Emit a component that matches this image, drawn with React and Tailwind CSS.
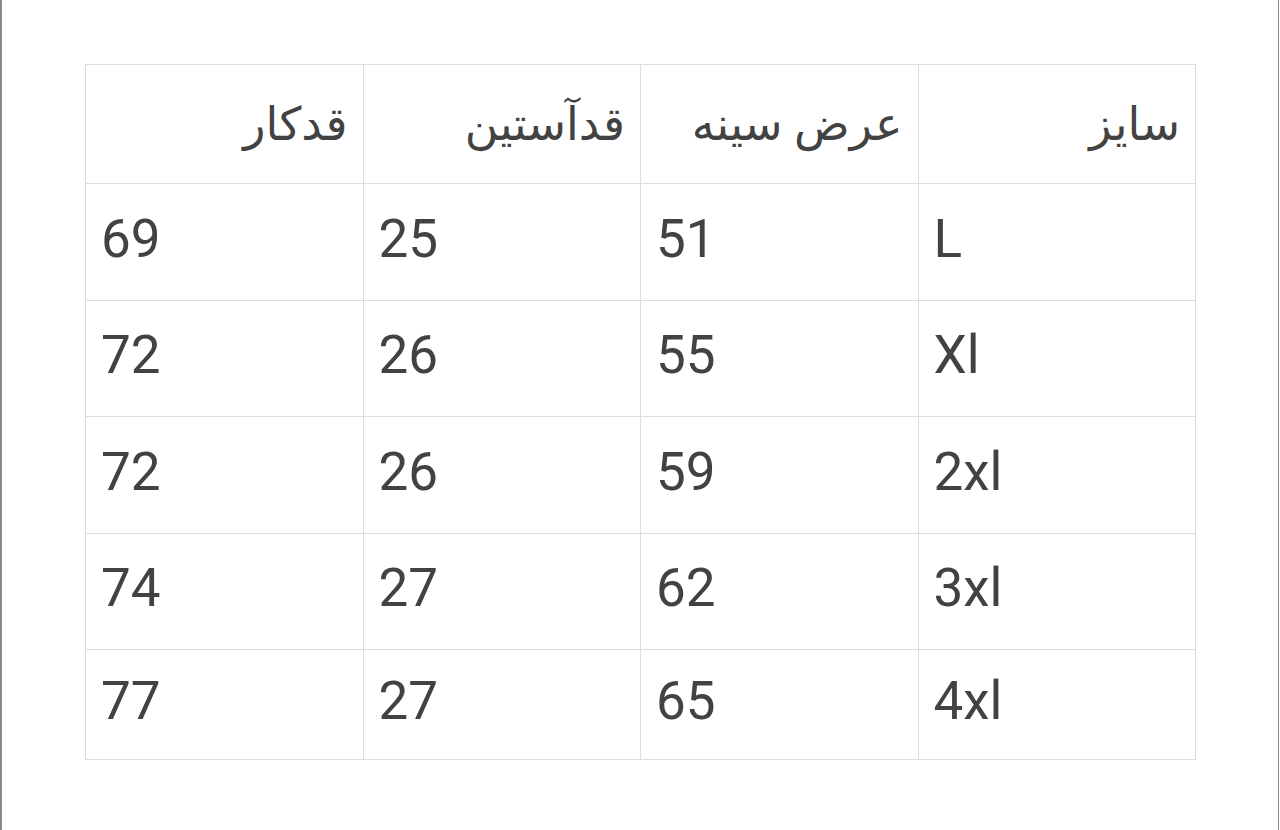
import React from "react";

const headers = ["سایز", "عرض سینه", "قدآستین", "قدکار"];
const rows = [
  { h: "h-[116px]", cells: ["L", "51", "25", "69"] },
  { h: "h-[115px]", cells: ["Xl", "55", "26", "72"] },
  { h: "h-[116px]", cells: ["2xl", "59", "26", "72"] },
  { h: "h-[115px]", cells: ["3xl", "62", "27", "74"] },
  { h: "h-[109px]", cells: ["4xl", "65", "27", "77"] },
];

export default function App() {
  return (
    <div className="w-[1279px] h-[830px] bg-white border-l-2 border-r border-[#8a8a8a] pl-[83px] pt-[64px] font-['Roboto','DejaVu_Sans',sans-serif] text-[#424242]">
      <div
        dir="rtl"
        className="w-[1111px] grid grid-cols-4 gap-px p-px bg-[#dcdcdc]"
      >
        {headers.map((t) => (
          <div key={t} className="h-[118px] bg-white flex items-center justify-start pr-[15px] text-[46px] leading-none">
            {t}
          </div>
        ))}
        {rows.map((r, i) =>
          r.cells.map((c, j) => (
            <div
              key={i + "-" + j}
              dir="ltr"
              className={`${r.h} bg-white flex items-center justify-start pl-[15px] pb-[6px] text-[53px] leading-none`}
            >
              {c}
            </div>
          ))
        )}
      </div>
    </div>
  );
}
